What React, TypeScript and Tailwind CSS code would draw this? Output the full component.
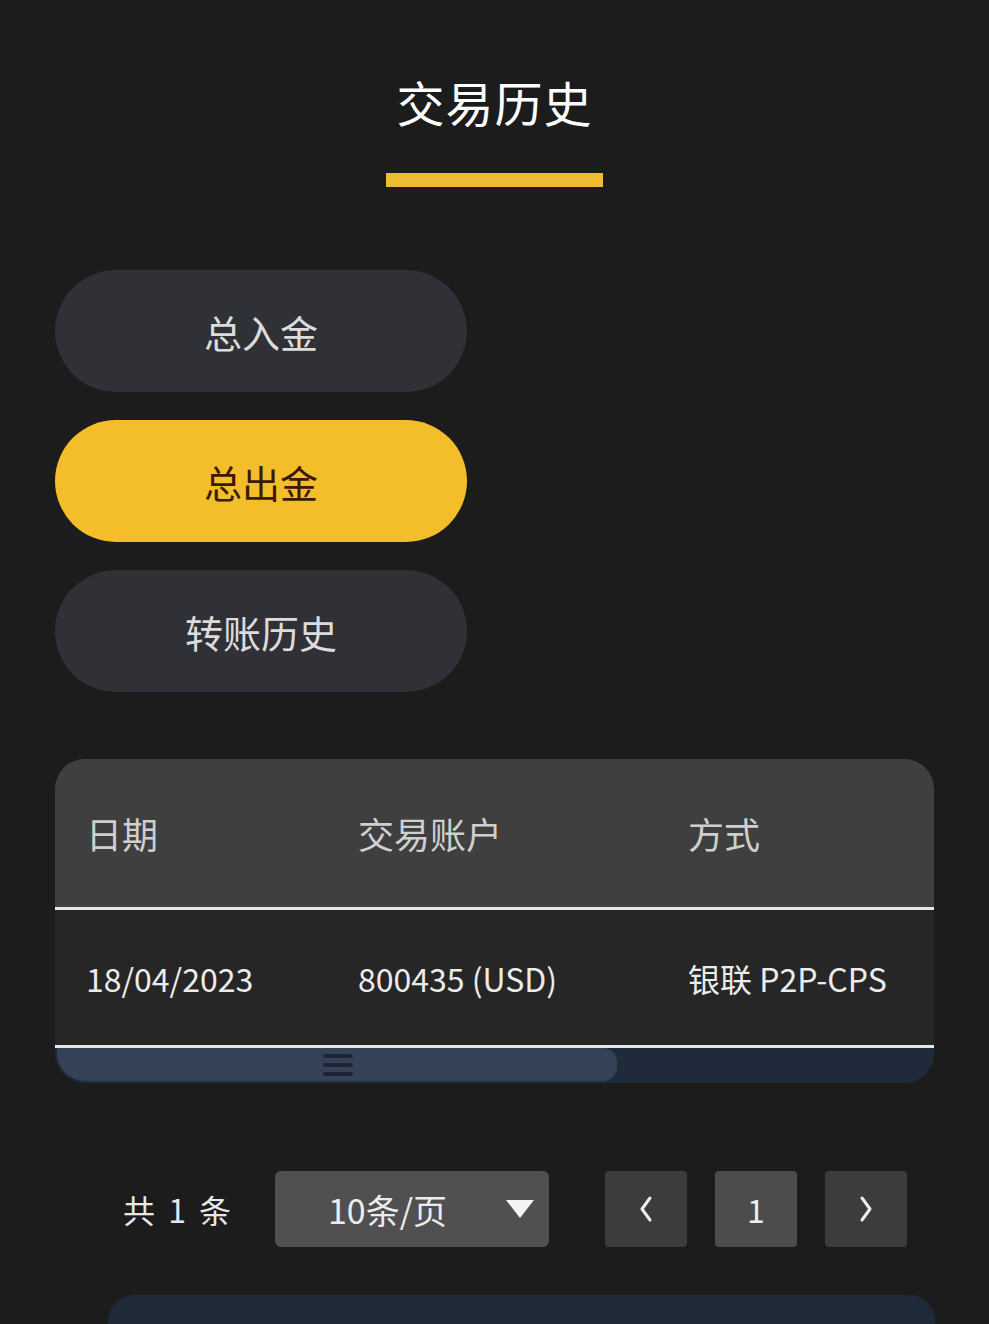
import React from 'react';

const font = { fontFamily: '"Noto Sans CJK SC", "Noto Sans", sans-serif' };

function TabButton({ label, active }: { label: string; active?: boolean }) {
  return (
    <div
      className={`w-[412px] h-[122px] shrink-0 rounded-full flex items-center justify-center text-[38px] ${
        active ? 'bg-[#f4bd2a] text-[#3a1a00]' : 'bg-[#303136] text-[#dcdcdc]'
      }`}
    >
      {label}
    </div>
  );
}

export default function App() {
  return (
    <div className="w-[989px] h-[1324px] bg-[#1c1c1c] overflow-hidden flex flex-col" style={font}>
      {/* title */}
      <div className="shrink-0 flex flex-col items-center pt-[70px]">
        <h1 className="text-[48px] leading-[62px] text-white tracking-[1px]">交易历史</h1>
        <div className="mt-[41px] w-[217px] h-[14px] bg-[#f0bc32]" />
      </div>

      {/* tabs */}
      <div className="shrink-0 flex flex-col gap-[28px] pl-[55px] mt-[83px]">
        <TabButton label="总入金" />
        <TabButton label="总出金" active />
        <TabButton label="转账历史" />
      </div>

      {/* table */}
      <div className="shrink-0 mx-[55px] mt-[67px] rounded-[30px] overflow-hidden bg-[#1e2a3a]">
        <div className="h-[148px] bg-[#3f3f3f] flex items-center text-[36px] text-[#cfcfcf]">
          <div className="w-[303px] pl-[31px]">日期</div>
          <div className="w-[330px]">交易账户</div>
          <div>方式</div>
        </div>
        <div className="h-[3px] bg-[#e6e6e6]" />
        <div className="h-[135px] bg-[#262626] flex items-center text-[32px] text-[#ececec]">
          <div className="w-[303px] pl-[31px]">18/04/2023</div>
          <div className="w-[330px]">800435 (USD)</div>
          <div>银联 P2P-CPS</div>
        </div>
        <div className="h-[3px] bg-[#e6e6e6]" />
        <div className="h-[35px] bg-[#1f2a3a] flex items-stretch">
          <div className="w-[560px] ml-[2px] mb-[2px] bg-[#344156] rounded-bl-[28px] rounded-r-[14px] flex items-center pl-[266px]">
            <div className="flex flex-col gap-[5px]">
              <div className="w-[30px] h-[4px] rounded-full bg-[#1c2533]" />
              <div className="w-[30px] h-[4px] rounded-full bg-[#1c2533]" />
              <div className="w-[30px] h-[4px] rounded-full bg-[#1c2533]" />
            </div>
          </div>
        </div>
      </div>

      {/* pagination */}
      <div className="shrink-0 flex items-center mt-[88px] pl-[123px]">
        <span className="text-[32px] text-[#e8e8e8] w-[152px] tracking-[3px]">共 1 条</span>
        <div className="w-[274px] h-[76px] rounded-[6px] bg-[#505050] flex items-center justify-between pl-[53px] pr-[14px]">
          <span className="text-[34px] text-[#ececec]">10条/页</span>
          <svg width="30" height="22" viewBox="0 0 30 22">
            <polygon points="1,2 29,2 15,20" fill="#f4f4f4" />
          </svg>
        </div>
        <div className="ml-[56px] w-[82px] h-[76px] rounded-[4px] bg-[#3c3c3c] flex items-center justify-center">
          <svg width="20" height="30" viewBox="0 0 20 30" fill="none" stroke="#eeeeee" strokeWidth="3" strokeLinecap="round" strokeLinejoin="round">
            <polyline points="14,4 6,15 14,26" />
          </svg>
        </div>
        <div className="ml-[28px] w-[82px] h-[76px] rounded-[4px] bg-[#4c4c4c] flex items-center justify-center text-[32px] text-[#eeeeee]">
          1
        </div>
        <div className="ml-[28px] w-[82px] h-[76px] rounded-[4px] bg-[#3c3c3c] flex items-center justify-center">
          <svg width="20" height="30" viewBox="0 0 20 30" fill="none" stroke="#eeeeee" strokeWidth="3" strokeLinecap="round" strokeLinejoin="round">
            <polyline points="6,4 14,15 6,26" />
          </svg>
        </div>
      </div>

      {/* bottom bar */}
      <div className="shrink-0 ml-[108px] mr-[54px] mt-[48px] h-[60px] rounded-t-[26px] bg-[#1f2a38]" />
    </div>
  );
}
